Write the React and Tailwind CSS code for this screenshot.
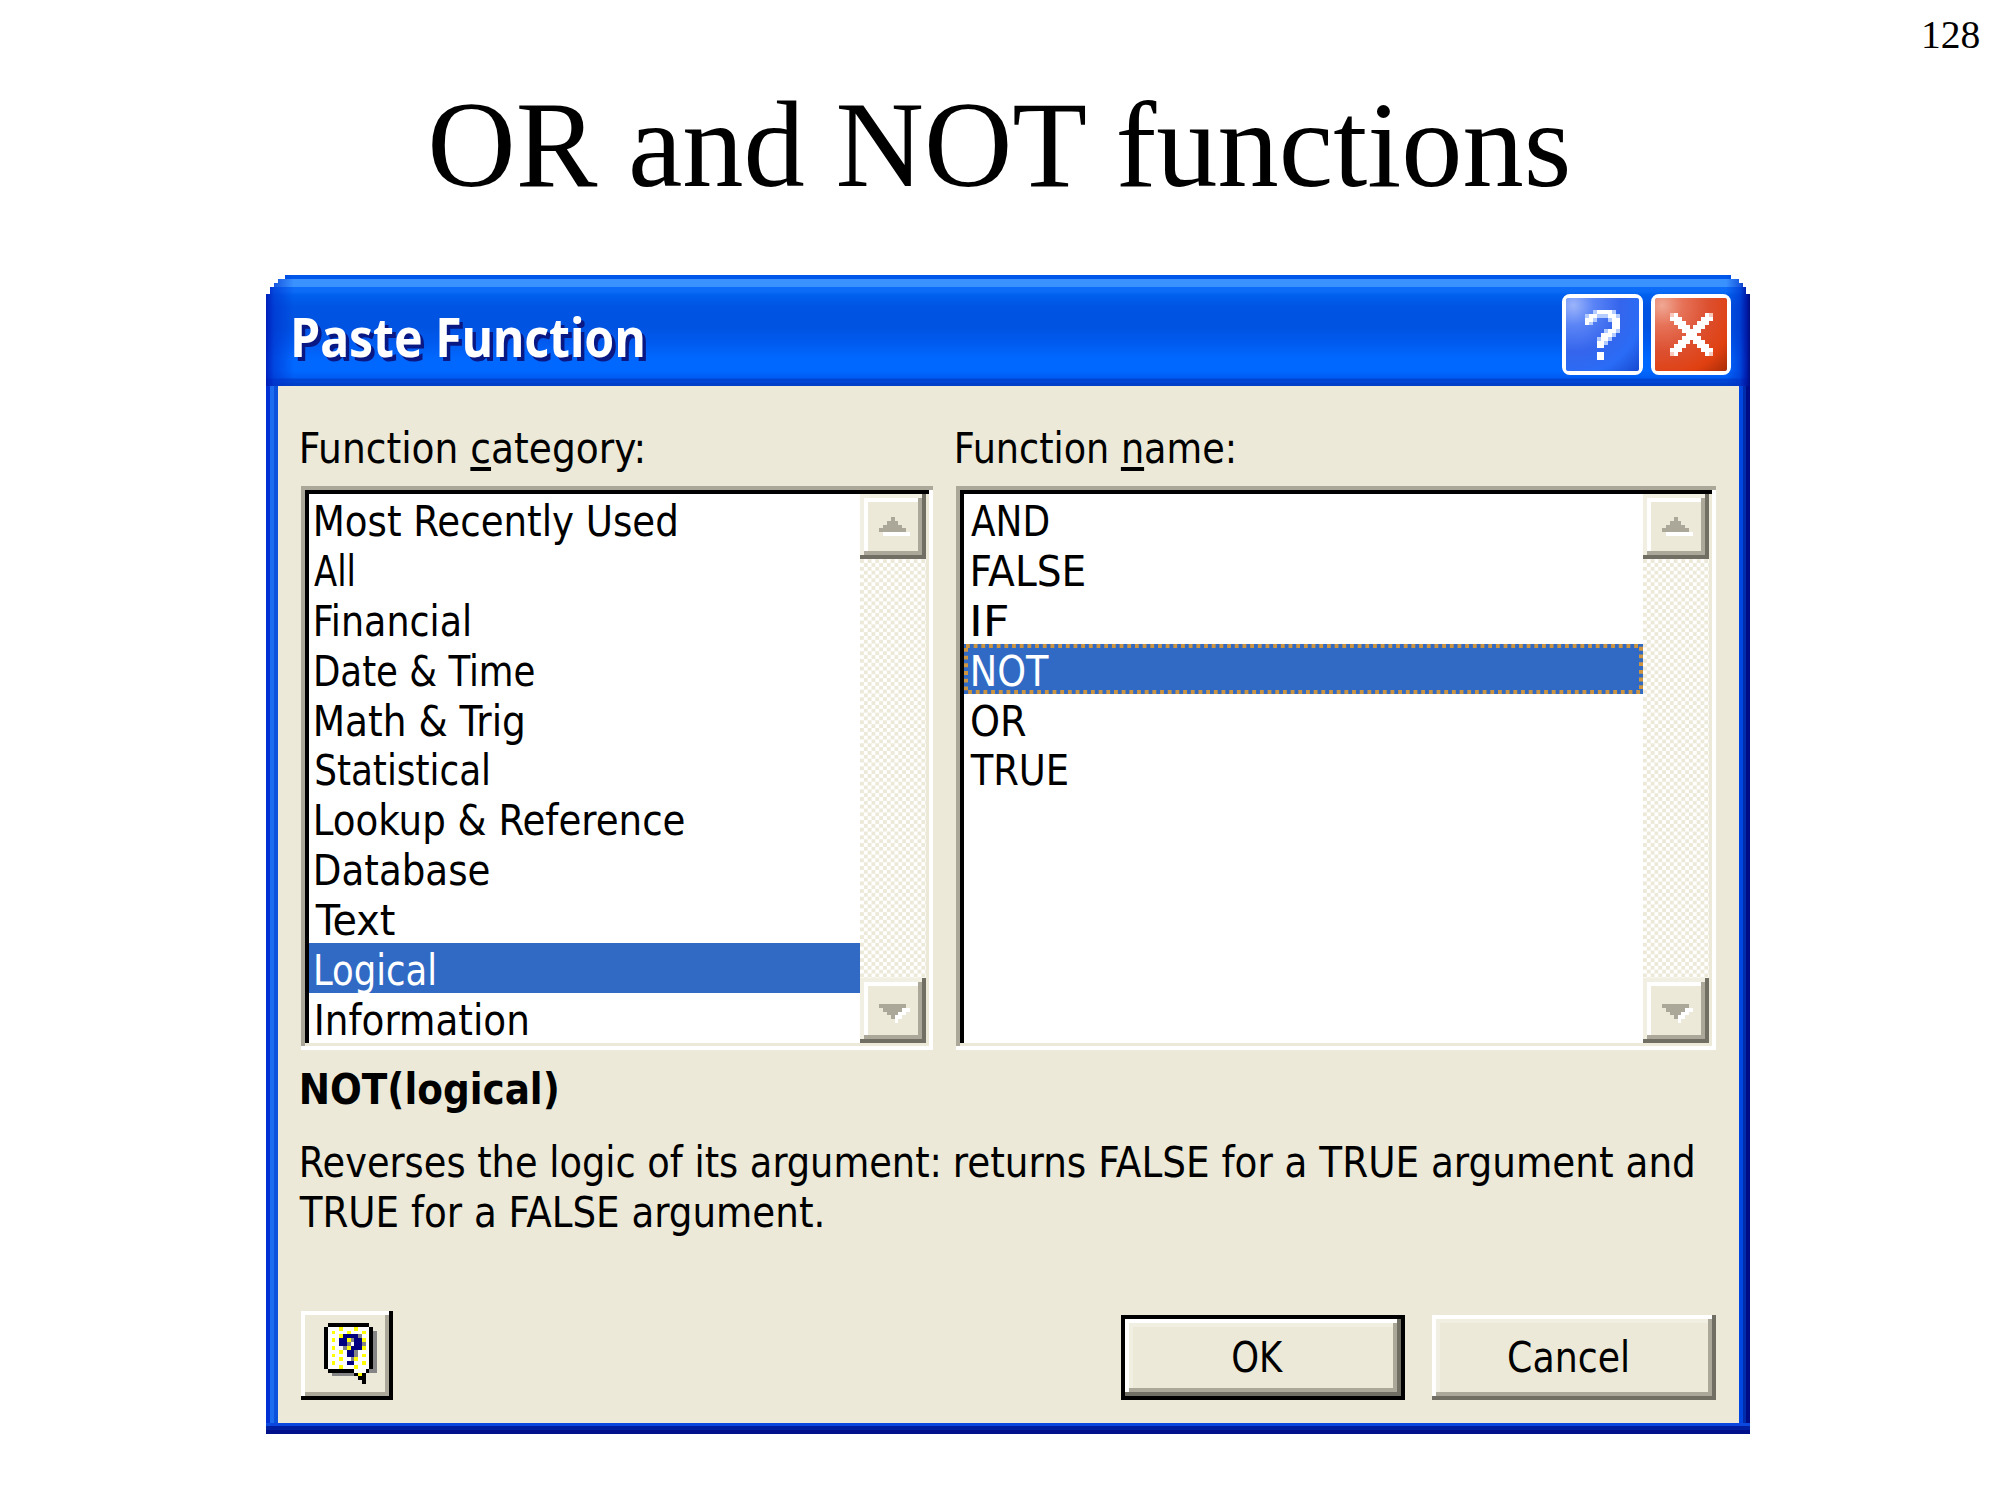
import React, { useLayoutEffect, useRef, useState } from "react";

/* Text drawn so that its ink starts at the left edge (plus `dx`) and is `w` pixels wide. */
function Fit({ w, dx = 0, className = "", children }) {
  const ref = useRef(null);
  const [transform, setTransform] = useState("none");
  useLayoutEffect(() => {
    const el = ref.current;
    const cs = getComputedStyle(el);
    const ctx = document.createElement("canvas").getContext("2d");
    const zoom = 10;
    ctx.font = `${cs.fontWeight} ${parseFloat(cs.fontSize) * zoom}px ${cs.fontFamily}`;
    const m = ctx.measureText(el.textContent);
    const left = m.actualBoundingBoxLeft / zoom;
    const ink = left + m.actualBoundingBoxRight / zoom;
    setTransform(`translateX(${dx}px) scaleX(${w / ink}) translateX(${left}px)`);
  }, [w, dx]);
  return (
    <span className="block" style={{ width: w }}>
      <span ref={ref} className={`inline-block origin-left whitespace-pre ${className}`} style={{ transform }}>
        {children}
      </span>
    </span>
  );
}

const UI = "font-['DejaVu_Sans_Condensed','DejaVu_Sans',sans-serif] text-[42.4px]";

/* Classic raised and sunken edges with square corners. */
const RAISED = "p-1 shadow-[inset_-4px_-4px_0_#716f64,inset_4px_4px_0_#ffffff]";
const RAISED_INNER = "p-1 shadow-[inset_-4px_-4px_0_#aca899,inset_4px_4px_0_#f1efe2]";

function Pixels({ rows, colors, className }) {
  const cols = Math.max(...rows.map((r) => r.length));
  return (
    <svg className={className} viewBox={`0 0 ${cols} ${rows.length}`} preserveAspectRatio="none" shapeRendering="crispEdges">
      {rows.flatMap((r, y) =>
        [...r].map((c, x) => (colors[c] ? <rect key={`${x}-${y}`} x={x} y={y} width="1" height="1" fill={colors[c]} /> : null))
      )}
    </svg>
  );
}

const QUESTION = [
  "..lwwwwl.",
  "lwwlllwwl",
  "wwl...lww",
  "wl.....ww",
  ".......ww",
  ".....lwwl",
  "....wwwl.",
  "...lwwl..",
  "...wwl...",
  "...ww....",
  ".........",
  "...ww....",
  "...ww....",
];

const CROSS = [
  "lw.......wl",
  "www.....www",
  ".www...www.",
  "..www.www..",
  "...wwwww...",
  "....www....",
  "...wwwww...",
  "..www.www..",
  ".www...www.",
  "www.....www",
  "lw.......wl",
];

const HELP = [
  ".kkkkkkkkkkk..",
  "kwwwywwwywwwk.",
  "kwywwwywwwywkg",
  "kwwwybbbbgwwkg",
  "kwywbbygbbywkg",
  "kwwwbbgwbbgwkg",
  "kwywwgybbbywkg",
  "kwwwywbbgwwwkg",
  "kwywwwbbgwywkg",
  "kwwwywwgywwwkg",
  "kwywwwbbwwywkg",
  "kwwwywwwywwwkg",
  ".kkkkkkkwwwkgg",
  "..ggggggkyk...",
  ".........kk...",
  "..........k...",
];

function CaptionButton({ face, rows, colors, size, width }) {
  return (
    <div className={`flex h-[81px] items-center justify-center rounded-[8px] border-4 border-white ${width}`}>
      <div className={`flex h-full w-full items-center justify-center rounded-[2px] ${face}`}>
        <Pixels rows={rows} colors={colors} className={size} />
      </div>
    </div>
  );
}

function ScrollButton({ dir }) {
  return (
    <div className="h-[65px] p-1 shadow-[inset_-4px_-4px_0_#716f64,inset_4px_4px_0_#f1efe2]">
      <div className="flex h-full justify-center bg-[#ece9d8] p-1 shadow-[inset_-4px_-4px_0_#aca899,inset_4px_4px_0_#ffffff]">
        {dir === "up" ? (
          <Pixels
            rows={["...g....", "..ggg...", ".ggggg..", "ggggggg.", ".wwwwwww"]}
            colors={{ g: "#aca899", w: "#ffffff" }}
            className="mt-[15px] ml-[3px] h-[19px] w-[31px]"
          />
        ) : (
          <Pixels
            rows={["ggggggg.", ".gggggww", "..gggww.", "...gww..", "....w..."]}
            colors={{ g: "#aca899", w: "#ffffff" }}
            className="mt-[18px] ml-[3px] h-[19px] w-[31px]"
          />
        )}
      </div>
    </div>
  );
}

function ScrollBar() {
  return (
    <div className="flex w-[66px] shrink-0 flex-col justify-between bg-[repeating-conic-gradient(#ece9d8_0_25%,#ffffff_0_50%)] bg-[length:7.68px_7.68px]">
      <ScrollButton dir="up" />
      <ScrollButton dir="down" />
    </div>
  );
}

function ListBox({ items, selected, focus, width }) {
  return (
    <div className={`h-[564px] p-1 shadow-[inset_0_-4px_0_#ffffff,inset_0_4px_0_#aca899,inset_-4px_0_0_#ffffff,inset_4px_0_0_#aca899] ${width}`}>
      <div className="flex h-full bg-white pt-1 pr-[3px] pb-[3px] pl-1 shadow-[inset_0_-3px_0_#ece9d8,inset_0_4px_0_#000000,inset_-3px_0_0_#ece9d8,inset_4px_0_0_#000000]">
        <div className="min-w-0 flex-1">
          {items.map(([name, w, dx = 0]) => (
            <div key={name} className={`relative h-[49.9px] pl-2 ${name === selected ? "bg-[#316ac5] text-white" : "text-black"}`}>
              {name === selected && focus && (
                <svg className="absolute inset-0 h-full w-full" fill="none">
                  <rect x="2" y="2" width="675" height="46" stroke="#ce9540" strokeWidth="4" strokeDasharray="3.84 3.84" />
                </svg>
              )}
              <Fit w={w} dx={dx} className={`${UI} leading-[56px]`}>{name}</Fit>
            </div>
          ))}
        </div>
        <ScrollBar />
      </div>
    </div>
  );
}

const CATEGORIES = [
  ["Most Recently Used", 360, -1],
  ["All", 39, -3],
  ["Financial", 153, -1],
  ["Date & Time", 218, -1],
  ["Math & Trig", 207, -1],
  ["Statistical", 172, -1],
  ["Lookup & Reference", 368, -1],
  ["Database", 173, -1],
  ["Text", 80, -2],
  ["Logical", 118, -1],
  ["Information", 210],
];

const NAMES = [
  ["AND", 77, -1],
  ["FALSE", 111, 1],
  ["IF", 34, 1],
  ["NOT", 76, 1],
  ["OR", 54],
  ["TRUE", 97, -2],
];

const U = "underline decoration-[4px] underline-offset-[4px] [text-decoration-skip-ink:none]";

export default function App() {
  return (
    <div className="h-[1500px] w-[2000px] overflow-hidden bg-white text-black">
      <div className="flex h-[60px] justify-end pt-[13px] pr-[21px] font-['Liberation_Serif',serif]">
        <Fit w={55} className="text-[40px] leading-[44px]">128</Fit>
      </div>
      <div className="h-[215px] pt-[15px] pl-[431px] font-['Liberation_Serif',serif]">
        <Fit w={1139} className="text-[122px] leading-[140px]">OR and NOT functions</Fit>
      </div>

      <div className="ml-[266px] flex h-[1159px] w-[1484px] flex-col bg-[linear-gradient(#0a48e0_0_1151px,#001ea0_1151px_1155px,#00108a_1155px)] [clip-path:polygon(19px_0,1465px_0,1465px_4px,1473px_4px,1473px_8px,1477px_8px,1477px_12px,1480px_12px,1480px_19px,1484px_19px,1484px_100%,0_100%,0_19px,4px_19px,4px_12px,8px_12px,8px_8px,12px_8px,12px_4px,19px_4px)]">
        <div className="h-[111px] bg-[linear-gradient(#0058ea_0_4px,#3a92ff_4px_12px,#0d6cf7_12px_16px,#0060ee_20px,#0054e3_32px,#0053e1_52px,#005bf0_68px,#0068ff_84px,#0067ff_96px,#005cf2_103px,#0044d4_104px_108px,#003fc8_108px)]">
          <div className="flex h-full items-start bg-[linear-gradient(90deg,#0012b0cc_0,#0030cc99_8px,#0050e000_28px,#0050e000_1460px,#0030c899_1474px,#00109ecc_1480px,#000c80_1484px)] pt-[19px] pl-[27px]">
            <Fit w={349} dx={1} className="font-['Noto_Sans','Open_Sans',sans-serif] text-[54px] leading-[84px] font-bold text-white [text-shadow:4px_4px_0_#0a1883]">
              Paste Function
            </Fit>
            <div className="ml-[920px] flex gap-2">
              <CaptionButton
                width="w-[81px]"
                face="bg-[radial-gradient(circle_at_10%_10%,#9cb4fa_0,#5a84f6_22%,#3565ec_50%,#2a6cf6_75%,#1748d0_100%)]"
                rows={QUESTION}
                colors={{ w: "#ffffff", l: "#b4ccff" }}
                size="h-[50px] w-[35px]"
              />
              <CaptionButton
                width="w-[80px]"
                face="bg-[radial-gradient(circle_at_10%_10%,#f0a894_0,#e67258_22%,#dc5030_50%,#e04010_78%,#a82c08_100%)]"
                rows={CROSS}
                colors={{ w: "#ffffff", l: "#f8c8bc" }}
                size="h-[43px] w-[43px]"
              />
            </div>
          </div>
        </div>

        <div className="flex h-[1037px] border-r-[4px] border-l-[4px] border-l-[#0030d4] border-r-[#000c86]">
          <div className="w-1 bg-[#1c6cf0]" />
          <div className="w-1 bg-[#0a52dc]" />
          <div className="flex flex-1 flex-col bg-[#ece9d8] pt-[37.5px] pl-[23px]">
            <div className="flex h-[62.5px]">
              <div className="w-[655px]">
                <Fit w={340} dx={1} className={`${UI} leading-[50px]`}>Function <span className={U}>c</span>ategory:</Fit>
              </div>
              <Fit w={276} dx={1} className={`${UI} leading-[50px]`}>Function <span className={U}>n</span>ame:</Fit>
            </div>
            <div className="flex gap-[23px]">
              <ListBox items={CATEGORIES} selected="Logical" width="w-[632px]" />
              <ListBox items={NAMES} selected="NOT" focus width="w-[760px]" />
            </div>
            <div className="mt-[15px] h-[73px]">
              <Fit w={255} dx={1} className={`${UI} leading-[50px] font-bold`}>NOT(logical)</Fit>
            </div>
            <div className="h-[173px]">
              <div className="flex gap-[19px]">
                <Fit w={636} dx={1} className={`${UI} leading-[50px]`}>Reverses the logic of its argument:</Fit>
                <Fit w={737} className={`${UI} leading-[50px]`}>returns FALSE for a TRUE argument and</Fit>
              </div>
              <Fit w={523} dx={-2} className={`${UI} leading-[50px]`}>TRUE for a FALSE argument.</Fit>
            </div>
            <div className="flex items-end">
              <button className="h-[89px] w-[92px] p-1 shadow-[inset_-4px_-4px_0_#000000,inset_4px_4px_0_#ffffff]">
                <span className="flex h-full w-full border-r-4 border-b-4 border-[#aca899] pt-2 pl-[19px]">
                  <Pixels
                    rows={HELP}
                    colors={{ k: "#000000", w: "#ffffff", y: "#ffff00", b: "#000080", g: "#858585" }}
                    className="h-[61px] w-[53px]"
                  />
                </span>
              </button>
              <button className="ml-[728px] h-[85px] w-[284px] border-4 border-black">
                <span className={`block h-full ${RAISED}`}>
                  <span className={`flex h-full justify-center ${RAISED_INNER}`}>
                    <span className="mt-[6px] -ml-[11px] block text-left">
                      <Fit w={50} className={`${UI} leading-[50px]`}>OK</Fit>
                    </span>
                  </span>
                </span>
              </button>
              <button className={`ml-[27px] h-[85px] w-[284px] ${RAISED}`}>
                <span className={`flex h-full justify-center ${RAISED_INNER}`}>
                  <span className="mt-[10px] -ml-[12px] block text-left">
                    <Fit w={118} className={`${UI} leading-[50px]`}>Cancel</Fit>
                  </span>
                </span>
              </button>
            </div>
          </div>
          <div className="w-1 bg-[#0046e0]" />
          <div className="w-[3px] bg-[#002cac]" />
        </div>
      </div>
    </div>
  );
}
